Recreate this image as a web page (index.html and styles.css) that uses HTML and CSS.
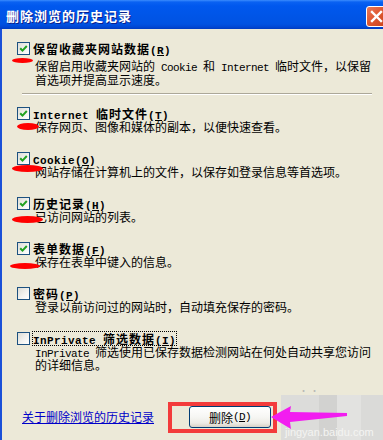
FILE: index.html
```html
<!DOCTYPE html>
<html lang="zh-CN">
<head>
<meta charset="utf-8">
<link rel="stylesheet" href="styles.css">
</head>
<body>
<div class="window">
  <div class="titlebar">
    <span class="title">删除浏览的历史记录</span>
    <span class="close"><svg width="19" height="19" viewBox="0 0 19 19"><path d="M5 5 L14 14 M14 5 L5 14" stroke="#fff" stroke-width="2.4" stroke-linecap="square"/></svg></span>
  </div>
  <div class="body">
    <div class="content">
      <div class="item first">
        <div class="label-row"><span class="cb"><svg width="11" height="11" viewBox="0 0 11 11"><path d="M2.2 5.2 L4.5 7.6 L8.8 3" fill="none" stroke="#21A121" stroke-width="2"/></svg></span><span class="label">保留收藏夹网站数据<span class="en">(<u>R</u>)</span></span></div>
        <div class="desc">保留启用收藏夹网站的<span class="en"> Cookie </span>和<span class="en"> Internet </span>临时文件，以保留<br>首选项并提高显示速度。</div>
      </div>
      <div class="sep"></div>
      <div class="item">
        <div class="label-row"><span class="cb"><svg width="11" height="11" viewBox="0 0 11 11"><path d="M2.2 5.2 L4.5 7.6 L8.8 3" fill="none" stroke="#21A121" stroke-width="2"/></svg></span><span class="label"><span class="en">Internet </span>临时文件<span class="en">(<u>T</u>)</span></span></div>
        <div class="desc">保存网页、图像和媒体的副本，以便快速查看。</div>
      </div>
      <div class="item">
        <div class="label-row"><span class="cb"><svg width="11" height="11" viewBox="0 0 11 11"><path d="M2.2 5.2 L4.5 7.6 L8.8 3" fill="none" stroke="#21A121" stroke-width="2"/></svg></span><span class="label"><span class="en">Cookie(<u>O</u>)</span></span></div>
        <div class="desc">网站存储在计算机上的文件，以保存如登录信息等首选项。</div>
      </div>
      <div class="item">
        <div class="label-row"><span class="cb"><svg width="11" height="11" viewBox="0 0 11 11"><path d="M2.2 5.2 L4.5 7.6 L8.8 3" fill="none" stroke="#21A121" stroke-width="2"/></svg></span><span class="label">历史记录<span class="en">(<u>H</u>)</span></span></div>
        <div class="desc">已访问网站的列表。</div>
      </div>
      <div class="item">
        <div class="label-row"><span class="cb"><svg width="11" height="11" viewBox="0 0 11 11"><path d="M2.2 5.2 L4.5 7.6 L8.8 3" fill="none" stroke="#21A121" stroke-width="2"/></svg></span><span class="label">表单数据<span class="en">(<u>F</u>)</span></span></div>
        <div class="desc">保存在表单中键入的信息。</div>
      </div>
      <div class="item">
        <div class="label-row"><span class="cb"></span><span class="label">密码<span class="en">(<u>P</u>)</span></span></div>
        <div class="desc">登录以前访问过的网站时，自动填充保存的密码。</div>
      </div>
      <div class="item">
        <div class="label-row"><span class="cb"></span><span class="label focus"><span class="en">InPrivate </span>筛选数据<span class="en">(<u>I</u>)</span></span></div>
        <div class="desc"><span class="en">InPrivate </span>筛选使用已保存数据检测网站在何处自动共享您访问<br>的详细信息。</div>
      </div>
    </div>
    <div class="footer">
      <span class="link">关于删除浏览的历史记录</span>
      <span class="btn">删除<span class="en">(<u>D</u>)</span></span>
    </div>
  </div>

  <div class="watermark"><span class="wm-dots">• •</span><span class="wm-text">jingyan.baidu.com</span></div>
  <div class="mark m1"></div>
  <div class="mark m2"></div>
  <div class="mark m3"></div>
  <div class="mark m4"></div>
  <div class="mark m5"></div>
  <div class="redbox"></div>
  <svg class="arrow" width="80" height="30" viewBox="0 0 80 30"><path d="M0 12 L20 1 L19 7 L76 8 L76 11 L19 17 L20 24 Z" fill="#F21DF0"/></svg>
</div>
</body>
</html>
```

FILE: styles.css
```css
html, body {
  margin: 0;
  padding: 0;
}
body {
  width: 383px;
  height: 440px;
  overflow: hidden;
  background: #ECE9D8;
  font-family: "Noto Sans CJK SC", sans-serif;
  font-size: 12px;
  color: #000;
}
.window {
  position: relative;
  width: 383px;
  height: 440px;
  overflow: hidden;
}
.titlebar {
  display: flex;
  align-items: flex-start;
  height: 29px;
  padding-left: 6px;
  background: linear-gradient(to bottom, #3B8CFD 0, #0A62F2 2px, #0058EE 6px, #0055E7 16px, #0052E2 24px, #0047D4 27px, #003BBF 29px);
  overflow: hidden;
}
.title {
  margin-top: 8px;
  font-size: 13px;
  line-height: 16px;
  font-weight: 700;
  letter-spacing: 1px;
  color: #fff;
  text-shadow: 1px 1px 0 #0A1F8E;
  white-space: nowrap;
}
.close {
  margin-left: auto;
  margin-right: -4px;
  margin-top: 6px;
  width: 21px;
  height: 21px;
  box-sizing: border-box;
  border: 1px solid #fff;
  border-radius: 3px;
  background: linear-gradient(135deg, #E97A5A 0%, #E05A33 45%, #C8411C 100%);
  display: flex;
  align-items: center;
  justify-content: center;
}
.close svg { display: block; }
.body {
  height: 411px;
  border-left: 2px solid #1B50D8;
}
.content {
  padding: 13px 0 0 15px;
}
.item {
  display: flex;
  flex-direction: column;
}
.item + .item {
  margin-top: 19px;
}
.label-row {
  display: flex;
  align-items: center;
  height: 13px;
}
.cb {
  width: 13px;
  height: 13px;
  box-sizing: border-box;
  border: 1px solid #1C5180;
  margin-right: 3px;
  background: linear-gradient(135deg, #DCDCD6 0%, #F2F2EF 55%, #FFFFFF 100%);
  flex: none;
}
.cb svg { display: block; }
.label {
  font-weight: 700;
  letter-spacing: 1px;
  line-height: 13px;
  white-space: nowrap;
}
.label.focus {
  outline: 1px dotted #000;
  outline-offset: 0;
}
.en {
  font-family: "Liberation Mono", monospace;
  font-size: 11px;
  letter-spacing: -0.6px;
  line-height: 0;
}
.label .en {
  letter-spacing: 0.4px;
}
.desc {
  padding-left: 18px;
  line-height: 13px;
  white-space: nowrap;
}
.item.first .desc {
  margin-top: 4px;
  line-height: 14px;
}
.sep {
  margin: 6px 0 12px 5px;
  width: 350px;
  border-top: 1px solid #ACA899;
  border-bottom: 1px solid #FFFFFF;
}
.footer {
  display: flex;
  align-items: center;
  height: 22px;
  margin-top: 35px;
  padding-left: 20px;
}
.link {
  color: #0000C8;
  text-decoration: underline;
  line-height: 14px;
  white-space: nowrap;
}
.btn {
  margin-left: 35px;
  width: 82px;
  height: 22px;
  box-sizing: border-box;
  border: 1px solid #003C74;
  border-radius: 3px;
  background: linear-gradient(to bottom, #FFFFFF 0%, #F6F6F3 50%, #ECEBE5 80%, #D8D2C6 100%);
  display: flex;
  align-items: center;
  justify-content: center;
  white-space: nowrap;
}
.watermark {
  position: absolute;
  left: 281px;
  top: 395px;
  width: 102px;
  height: 45px;
  background: linear-gradient(to right, #DCDCDA 0, #DCDCDA 38px, #D2D2D0 38px, #D2D2D0 56px, #E2E2E0 56px, #E2E2E0 80px, #DADAD8 80px, #DADAD8 102px);
}
.wm-dots {
  position: absolute;
  left: 18px;
  top: -11px;
  font-size: 9px;
  color: #B8B8B4;
}
.wm-text {
  position: absolute;
  left: 4px;
  top: 31px;
  font-family: "Liberation Sans", sans-serif;
  font-size: 11px;
  color: #F4F4F2;
}
.mark {
  position: absolute;
  background: #FF0000;
  border-radius: 50%;
}
.m1 { left: 12px; top: 58px; width: 21px; height: 5px; }
.m2 { left: 17px; top: 123px; width: 22px; height: 7px; }
.m3 { left: 12px; top: 165px; width: 31px; height: 7px; }
.m4 { left: 12px; top: 216px; width: 31px; height: 7px; }
.m5 { left: 10px; top: 263px; width: 30px; height: 6px; }
.redbox {
  position: absolute;
  left: 168px;
  top: 402px;
  width: 109px;
  height: 31px;
  box-sizing: border-box;
  border: 4px solid #F33B3B;
}
.arrow {
  position: absolute;
  left: 271px;
  top: 405px;
}
```
